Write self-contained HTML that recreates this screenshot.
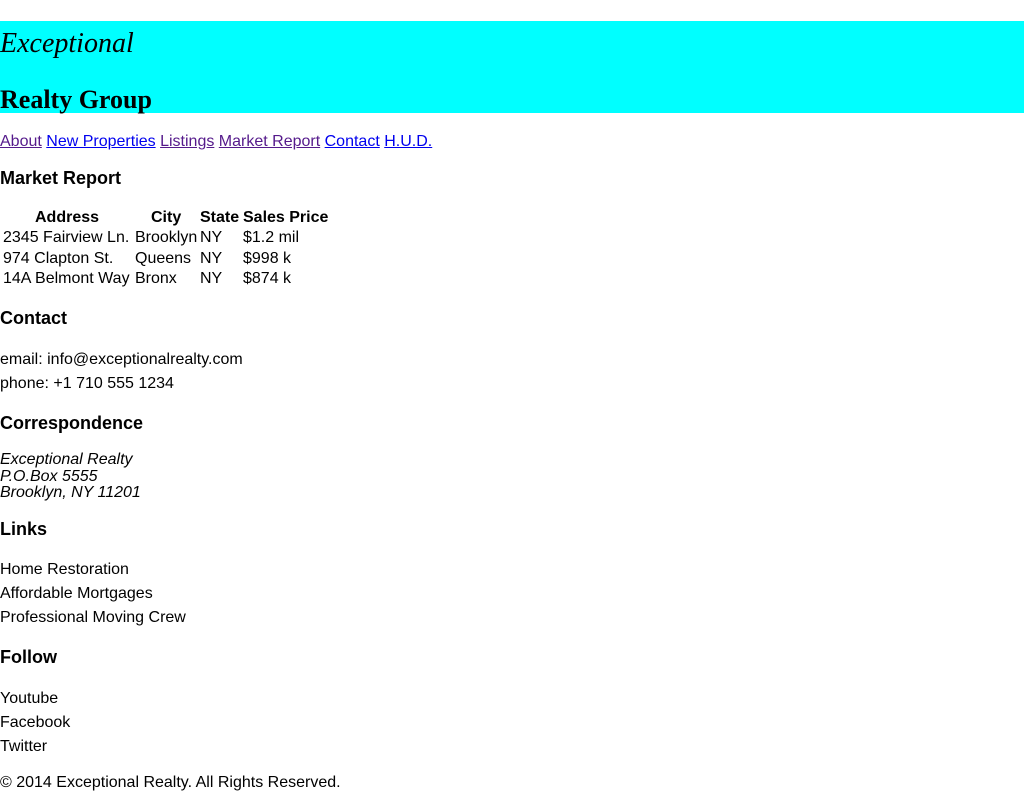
<!DOCTYPE html>
<html><head><meta charset="utf-8"><style>
body{margin:0;width:1024px;height:791px;position:relative;background:#fff;font-family:"Liberation Sans",Arial,sans-serif;font-size:16px;color:#000;overflow:hidden}
.a{position:absolute;white-space:nowrap;line-height:20px}
.h{font-weight:bold;font-size:18px;line-height:22px}
.b{font-weight:bold}
.i{font-style:italic;line-height:16.5px}
a{color:#0000ee;text-decoration:underline}
a.v{color:#551a8b}
#ban{position:absolute;left:0;top:21px;width:1024px;height:92px;background:#00ffff}
</style></head><body>
<div id="ban"></div>
<div class="a" style="left:0;top:24px;font-family:'Liberation Serif',serif;font-style:italic;font-size:28px;line-height:40px">Exceptional</div>
<div class="a" style="left:0;top:84px;font-family:'Liberation Serif',serif;font-weight:bold;font-size:26px;line-height:32px">Realty Group</div>
<div class="a" style="left:0;top:132px"><a class="v">About</a> <a>New Properties</a> <a class="v">Listings</a> <a class="v">Market Report</a> <a>Contact</a> <a>H.U.D.</a></div>
<div class="a h" style="left:0;top:167px">Market Report</div>
<div class="a b" style="left:35px;top:208px">Address</div>
<div class="a b" style="left:151px;top:208px">City</div>
<div class="a b" style="left:200px;top:208px">State</div>
<div class="a b" style="left:243px;top:208px">Sales Price</div>
<div class="a" style="left:3px;top:228px">2345 Fairview Ln.</div>
<div class="a" style="left:135px;top:228px">Brooklyn</div>
<div class="a" style="left:200px;top:228px">NY</div>
<div class="a" style="left:243px;top:228px">$1.2 mil</div>
<div class="a" style="left:3px;top:249px">974 Clapton St.</div>
<div class="a" style="left:135px;top:249px">Queens</div>
<div class="a" style="left:200px;top:249px">NY</div>
<div class="a" style="left:243px;top:249px">$998 k</div>
<div class="a" style="left:3px;top:269px">14A Belmont Way</div>
<div class="a" style="left:135px;top:269px">Bronx</div>
<div class="a" style="left:200px;top:269px">NY</div>
<div class="a" style="left:243px;top:269px">$874 k</div>
<div class="a h" style="left:0;top:307px">Contact</div>
<div class="a" style="left:0;top:350px">email: info@exceptionalrealty.com</div>
<div class="a" style="left:0;top:374px">phone: +1 710 555 1234</div>
<div class="a h" style="left:0;top:412px">Correspondence</div>
<div class="a i" style="left:0;top:452px">Exceptional Realty<br>P.O.Box 5555<br>Brooklyn, NY 11201</div>
<div class="a h" style="left:0;top:518px">Links</div>
<div class="a" style="left:0;top:560px">Home Restoration</div>
<div class="a" style="left:0;top:584px">Affordable Mortgages</div>
<div class="a" style="left:0;top:608px">Professional Moving Crew</div>
<div class="a h" style="left:0;top:646px">Follow</div>
<div class="a" style="left:0;top:689px">Youtube</div>
<div class="a" style="left:0;top:713px">Facebook</div>
<div class="a" style="left:0;top:737px">Twitter</div>
<div class="a" style="left:0;top:773px">© 2014 Exceptional Realty. All Rights Reserved.</div>
</body></html>
